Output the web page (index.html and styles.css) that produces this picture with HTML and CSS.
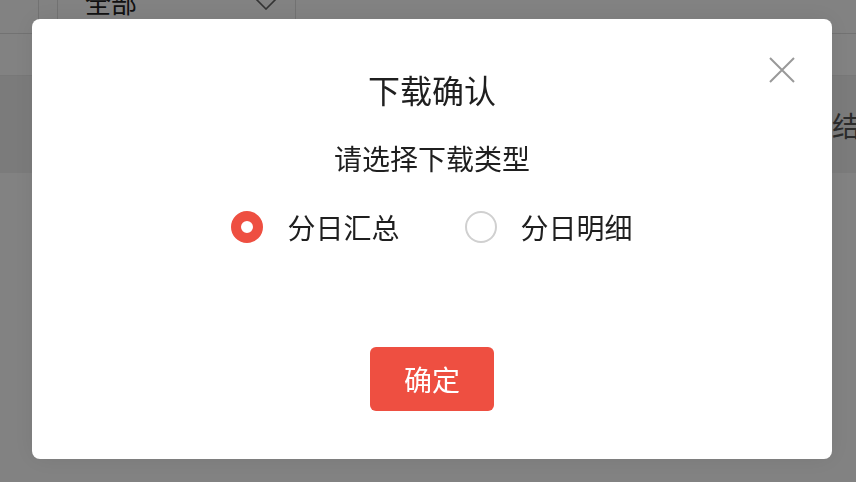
FILE: index.html
```html
<!DOCTYPE html>
<html lang="zh-CN">
<head>
<meta charset="utf-8">
<title>下载确认</title>
<link rel="stylesheet" href="styles.css">
</head>
<body>
<div class="page">
  <div class="filter-bar">
    <div class="filter-lead"></div>
    <div class="filter-select">
      <span class="filter-value">全部</span>
      <svg class="chevron" width="22" height="12" viewBox="0 0 22 12"><path d="M1 1 L11 11 L21 1" fill="none" stroke="#666" stroke-width="1.6"/></svg>
    </div>
  </div>
  <div class="sub-bar"></div>
  <div class="table-head">
    <span class="col-title">结果</span>
  </div>
  <div class="table-body"></div>
</div>

<div class="mask">
  <div class="dialog">
    <button class="close" aria-label="关闭">
      <svg width="26" height="26" viewBox="0 0 26 26"><path d="M1 1 L25 25 M25 1 L1 25" stroke="#999" stroke-width="2" fill="none"/></svg>
    </button>
    <div class="dialog-title">下载确认</div>
    <div class="dialog-sub">请选择下载类型</div>
    <div class="radio-group">
      <label class="radio-item">
        <span class="radio checked"></span>
        <span class="radio-label">分日汇总</span>
      </label>
      <label class="radio-item">
        <span class="radio"></span>
        <span class="radio-label">分日明细</span>
      </label>
    </div>
    <div class="actions">
      <button class="btn-ok">确定</button>
    </div>
  </div>
</div>
</body>
</html>
```

FILE: styles.css
```css
html, body {
  margin: 0;
  padding: 0;
  height: 100%;
  overflow: hidden;
}

body {
  font-family: "Noto Sans CJK SC", "Noto Sans", sans-serif;
  background: #ffffff;
  color: #333;
}

.page {
  display: flex;
  flex-direction: column;
  height: 100%;
}

.filter-bar {
  display: flex;
  height: 33px;
  border-bottom: 1px solid #e0e0e0;
}

.filter-lead {
  width: 38px;
  border-right: 1px solid #e0e0e0;
}

.filter-select {
  margin-left: 18px;
  width: 239px;
  border-left: 1px solid #e0e0e0;
  border-right: 1px solid #e0e0e0;
  display: flex;
  align-items: flex-start;
  justify-content: space-between;
  padding: 0 18px 0 27px;
  box-sizing: border-box;
  overflow: hidden;
}

.filter-value {
  font-size: 26px;
  line-height: 34px;
  margin-top: -15px;
  color: #222;
}

.chevron {
  margin-top: -2px;
}

.sub-bar {
  height: 41px;
  border-bottom: 1px solid #ebebeb;
}

.table-head {
  height: 97px;
  background: #f2f2f2;
  display: flex;
  align-items: center;
  padding-left: 832px;
  box-sizing: border-box;
}

.col-title {
  font-size: 28px;
  color: #555;
  white-space: nowrap;
}

.table-body {
  flex: 1;
}

.mask {
  position: fixed;
  inset: 0;
  background: rgba(0, 0, 0, 0.49);
  display: flex;
  align-items: flex-start;
  padding: 19px 0 0 32px;
}

.dialog {
  position: relative;
  width: 800px;
  height: 440px;
  background: #fff;
  border-radius: 8px;
  box-sizing: border-box;
  padding-top: 47px;
  display: flex;
  flex-direction: column;
  align-items: center;
  box-shadow: 0 0 24px rgba(0, 0, 0, 0.08);
}

.close {
  position: absolute;
  top: 38px;
  right: 37px;
  width: 26px;
  height: 26px;
  padding: 0;
  border: 0;
  background: none;
  display: flex;
}

.dialog-title {
  font-size: 32px;
  line-height: 46px;
  color: #1f1f1f;
}

.dialog-sub {
  margin-top: 26px;
  font-size: 28px;
  line-height: 40px;
  color: #1f1f1f;
}

.radio-group {
  margin-top: 29px;
  display: flex;
  gap: 65px;
}

.radio-item {
  display: flex;
  align-items: center;
  gap: 24px;
  height: 40px;
}

.radio {
  width: 32px;
  height: 32px;
  border-radius: 50%;
  border: 2px solid #d0d0d0;
  box-sizing: border-box;
  background: #fff;
}

.radio.checked {
  border: 10px solid #ee4f41;
  background: #fff;
}

.radio-label {
  font-size: 28px;
  line-height: 40px;
  color: #1f1f1f;
}

.actions {
  margin-top: 100px;
}

.btn-ok {
  width: 124px;
  height: 64px;
  border: 0;
  border-radius: 6px;
  background: #ee4f41;
  color: #fff;
  font-family: "Noto Sans CJK SC", sans-serif;
  font-size: 28px;
  padding: 0;
}
```
